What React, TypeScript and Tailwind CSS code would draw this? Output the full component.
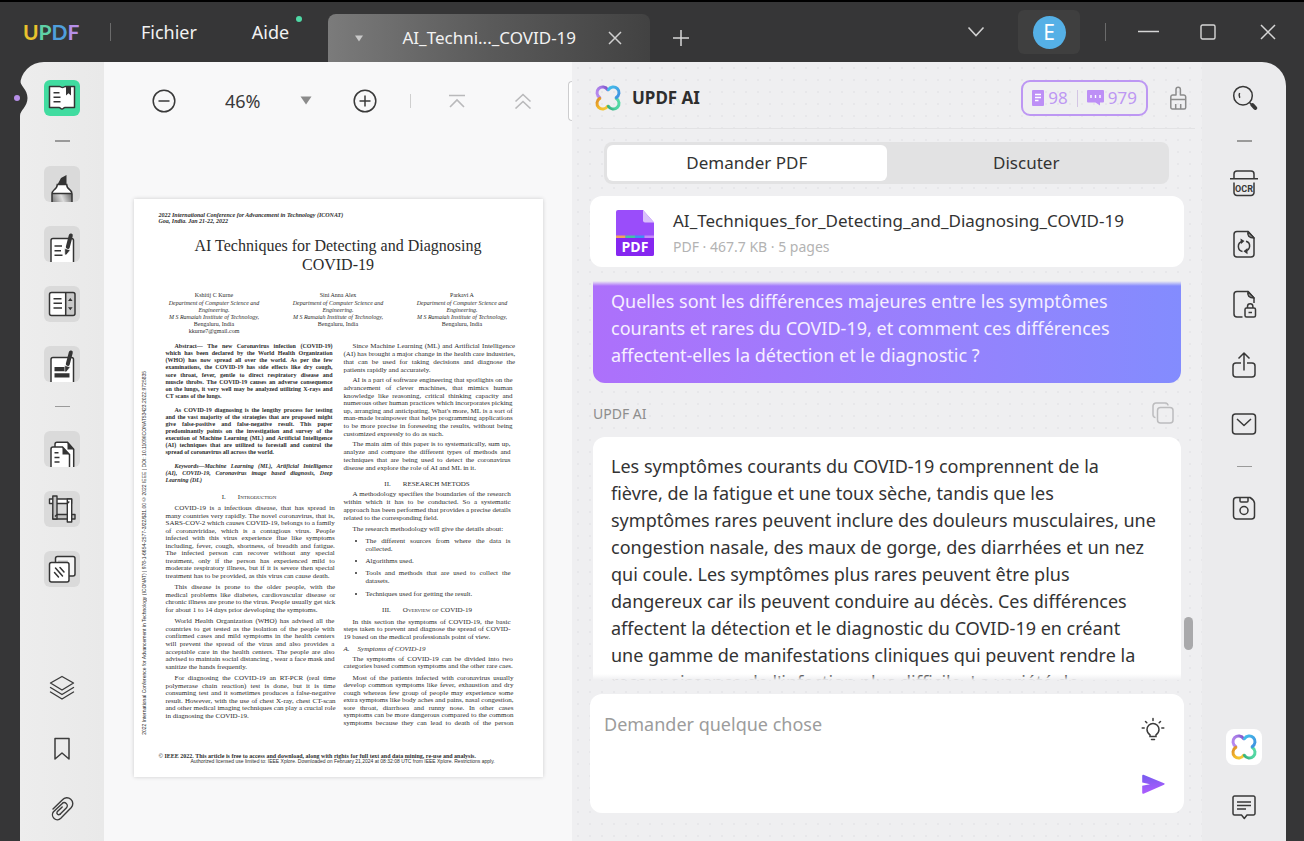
import React from "react";

const ui = "font-['Noto_Sans','Open_Sans',sans-serif]";

/* ---------- Brand ---------- */

function Wordmark() {
  return (
    <span className="font-['Lato',sans-serif] text-[21px] leading-6 font-bold">
      <span className="text-[#e8c22e]">U</span>
      <span className="text-[#5fd0a6]">P</span>
      <span className="text-[#4f9fdc]">D</span>
      <span className="text-[#b78fe8]">F</span>
    </span>
  );
}

function Clover({ id }: { id: string }) {
  return (
    <svg width="28" height="28" viewBox="0 0 28 28" fill="none" strokeWidth="3" strokeLinecap="round" aria-hidden="true">
      <defs>
        <linearGradient id={id + "p"} x1="2" y1="12" x2="14" y2="4" gradientUnits="userSpaceOnUse">
          <stop stopColor="#b98cf0" />
          <stop offset="0.6" stopColor="#a77be6" />
          <stop offset="1" stopColor="#7a50c8" />
        </linearGradient>
        <linearGradient id={id + "b"} x1="14" y1="3" x2="26" y2="13" gradientUnits="userSpaceOnUse">
          <stop stopColor="#45c0ea" />
          <stop offset="1" stopColor="#3f8fe0" />
        </linearGradient>
        <linearGradient id={id + "g"} x1="26" y1="15" x2="14" y2="26" gradientUnits="userSpaceOnUse">
          <stop stopColor="#58dba6" />
          <stop offset="0.6" stopColor="#4fd2a0" />
          <stop offset="1" stopColor="#2ba070" />
        </linearGradient>
        <linearGradient id={id + "y"} x1="3" y1="15" x2="14" y2="26" gradientUnits="userSpaceOnUse">
          <stop stopColor="#dd8f2a" />
          <stop offset="0.5" stopColor="#f3b929" />
          <stop offset="1" stopColor="#f0cf3a" />
        </linearGradient>
      </defs>
      <path d="M5.800 13.600A5.700 5.700 0 1 1 13.600 5.800" stroke={`url(#${id}p)`} />
      <path d="M5.800 14.400A5.700 5.700 0 1 0 13.600 22.200" stroke={`url(#${id}y)`} />
      <path d="M14.400 22.200A5.700 5.700 0 1 0 22.200 14.400" stroke={`url(#${id}g)`} />
      <path d="M14.400 5.800A5.700 5.700 0 1 1 22.200 13.600" stroke={`url(#${id}b)`} />
    </svg>
  );
}

/* ---------- Title bar ---------- */

function TitleBar() {
  return (
    <header className="flex h-[62px] shrink-0 items-center border-t-2 border-black pl-[23px] pr-7 text-[#f2f2f2]">
      <Wordmark />
      <span className="ml-[31px] h-[18px] w-px bg-[#6b6b6b]" />
      <nav className="ml-[29px] flex text-[18px] leading-6">
        <button className="w-[57px]">Fichier</button>
        <button className="relative ml-[53px] w-10">
          Aide
          <span className="absolute -right-3 -top-1 size-[6px] rounded-full bg-[#4fd9a5]" />
        </button>
      </nav>
      <div className="ml-[38px] flex h-12 w-[322px] items-center self-end rounded-t-lg bg-linear-to-r from-[#7b7b7b] via-[#5a5a5a] to-[#424242] pl-[26px] pr-[28px]">
        <svg width="10" height="7" viewBox="0 0 10 7" aria-hidden="true">
          <path d="M1 .5h8L5 6.500z" fill="#c9c9c9" />
        </svg>
        <span className="ml-[38px] flex-1 whitespace-nowrap text-[17px] leading-6">AI_Techni..._COVID-19</span>
        <button aria-label="Fermer l'onglet">
          <svg width="14" height="14" viewBox="0 0 14 14" stroke="#d0d0d0" strokeWidth="1.500" aria-hidden="true">
            <path d="M1 1l12 12M13 1L1 13" />
          </svg>
        </button>
      </div>
      <button aria-label="Nouvel onglet" className="ml-[22px] mt-3">
        <svg width="18" height="18" viewBox="0 0 18 18" stroke="#d8d8d8" strokeWidth="1.500" aria-hidden="true">
          <path d="M9 1v16M1 9h16" />
        </svg>
      </button>
      <div className="ml-auto flex items-center">
        <button aria-label="Liste des onglets">
          <svg width="18" height="12" viewBox="0 0 18 12" fill="none" stroke="#d0d0d0" strokeWidth="1.600" aria-hidden="true">
            <path d="M1.500 1.500L9 9.500l7.500-8" />
          </svg>
        </button>
        <button className="ml-[33px] flex h-11 w-[62px] items-center justify-center rounded-md bg-[#3f3f3f]">
          <span className="flex size-[33px] items-center justify-center rounded-full bg-[#55b0e6] text-[21px] leading-none text-white">E</span>
        </button>
        <span className="ml-[25px] h-[18px] w-px bg-[#6b6b6b]" />
        <button aria-label="Réduire" className="ml-8">
          <svg width="22" height="16" viewBox="0 0 22 16" stroke="#d6d6d6" strokeWidth="1.500" aria-hidden="true">
            <path d="M0 7.500h21" />
          </svg>
        </button>
        <button aria-label="Agrandir" className="ml-[40px]">
          <svg width="16" height="16" viewBox="0 0 16 16" fill="none" stroke="#d6d6d6" strokeWidth="1.400" aria-hidden="true">
            <rect x="1" y="1" width="14" height="14" rx="1.500" />
          </svg>
        </button>
        <button aria-label="Fermer" className="ml-[44px]">
          <svg width="16" height="16" viewBox="0 0 16 16" stroke="#d6d6d6" strokeWidth="1.500" aria-hidden="true">
            <path d="M1 1l14 14M15 1L1 15" />
          </svg>
        </button>
      </div>
    </header>
  );
}

/* ---------- Left rail ---------- */

const ink = "#343434";

const bookIcon = (
  <g>
    <path d="M5.500 6.500H15.500C17 6.500 17 7.500 18.500 7.500S20 6.500 21.500 6.500H30.500V27.500H21C19.500 27.500 19.500 29 18 29S16.500 27.500 15 27.500H5.500z" fill="#fff" stroke={ink} strokeWidth="1.500" strokeLinejoin="round" />
    <path d="M9.500 12.700h6M9.500 17.300h7M9.500 21.800h7" stroke={ink} strokeWidth="1.500" />
    <path d="M22 6h5v9.500l-2.500-2.200L22 15.500z" fill={ink} />
  </g>
);

const highlighterIcon = (
  <g>
    <path d="M13.500 18.500L17 12l5.500-3v9.500z" fill={ink} />
    <path d="M13.300 18.500h9.700c0 3 1 4 3 5.500 1.500 1 2 2 2 4v8H8v-8c0-2 .8-3 2-4 2.300-1.700 3.300-3 3.300-5.500z" fill="#fff" />
    <path d="M8 27.500h20V36H8z" fill="url(#hl)" />
    <path d="M8 36v-8c0-2 .8-3 2-4 2.300-1.700 3.300-3 3.300-5.500h9.400c0 3 1 4 3.300 5.500 1.500 1 2 2 2 4v8M8 27.500h20" fill="none" stroke={ink} strokeWidth="1.500" />
  </g>
);

function pen(dy: number) {
  return (
    <g transform={`translate(0 ${dy})`}>
      <path d="M26.800 9.500L23.800 21" stroke={ink} strokeWidth="4" strokeLinecap="round" />
      <path d="M20.700 22.500l5.600 1.500-3.600 4.500c-1 .8-1.800.5-1.900-.6z" fill={ink} stroke="#fff" strokeWidth=".6" />
    </g>
  );
}

const editIcon = (
  <g>
    <path d="M7 37V14.500a2 2 0 0 1 2-2h18.500a2 2 0 0 1 2 2V37z" fill="#fff" stroke={ink} strokeWidth="1.500" />
    <path d="M10.500 20h7.500M10.500 24.700h6.500M10.500 29.300h8" stroke={ink} strokeWidth="1.500" />
    {pen(0)}
  </g>
);

const formIcon = (
  <g>
    <rect x="5.500" y="6.500" width="25.500" height="23" rx="2" fill="#fff" />
    <path d="M21.700 6.500H29a2 2 0 0 1 2 2v19a2 2 0 0 1-2 2h-7.300z" fill="#c9c9c9" />
    <rect x="5.500" y="6.500" width="25.500" height="23" rx="2" fill="none" stroke={ink} strokeWidth="1.500" />
    <path d="M21.700 6.500v23" stroke={ink} strokeWidth="1.500" />
    <path d="M9.500 12.700h8M9.500 17.300h8.500M9.500 22h8.500" stroke={ink} strokeWidth="1.500" />
    <path d="M24 15l2.300-3 2.300 3zM24 21.300l2.300 3 2.300-3z" fill={ink} />
  </g>
);

const redactIcon = (
  <g>
    <path d="M7 37V13.500a2 2 0 0 1 2-2h18.500a2 2 0 0 1 2 2V37z" fill="#fff" stroke={ink} strokeWidth="1.500" />
    <path d="M10.500 21h10.500v4.200H10.500zM10.500 27.200h15v4.200h-15z" fill={ink} />
    {pen(-3)}
  </g>
);

const pagesIcon = (
  <g>
    <path d="M11 37V13.200a2 2 0 0 1 2-2h10.500l6.200 7V37z" fill="#fff" stroke={ink} strokeWidth="1.500" />
    <path d="M23.500 11v7.500h6.500z" fill={ink} />
    <path d="M7 37V18a2 2 0 0 1 2-2h9.500l7 7.500V37z" fill="#fff" stroke={ink} strokeWidth="1.500" />
    <path d="M18.500 16v7.500h7z" fill={ink} />
    <path d="M10.500 21.800h4M10.500 26.400h5M10.500 31h5" stroke={ink} strokeWidth="1.500" />
  </g>
);

const cropIcon = (
  <g stroke={ink} strokeWidth="1.400" strokeLinejoin="round">
    <rect x="9" y="23.500" width="22" height="4.500" fill="#c4c4c4" />
    <rect x="5.500" y="8" width="22" height="4.500" fill="#fff" />
    <rect x="8.800" y="5" width="4.200" height="23" fill="#c4c4c4" />
    <rect x="23.300" y="8" width="4.400" height="23" fill="#fff" />
    <path d="M23.300 12.500l2-2M13 23.500l-2 2" />
  </g>
);

const watermarkIcon = (
  <g stroke={ink} strokeWidth="1.500">
    <rect x="11.500" y="5.500" width="19.500" height="19.500" rx="2" fill="#f4f4f4" />
    <path d="M14 9.500h10v3H14z" fill="#c4c4c4" stroke="none" />
    <rect x="5.500" y="11.500" width="19.500" height="19.500" rx="2" fill="#fff" />
    <path d="M10.500 21.500l4 4.500M11.500 17l7 8M16 16.500l4 4.500" strokeLinecap="round" />
  </g>
);

const tiles: { label: string; art: React.ReactNode; box: string }[] = [
  { label: "Lecteur", art: bookIcon, box: "bg-[#41dca0]" },
  { label: "Commentaire", art: highlighterIcon, box: "bg-[#dadada]" },
  { label: "Modifier", art: editIcon, box: "bg-[#dadada]" },
  { label: "Formulaire", art: formIcon, box: "bg-[#dadada]" },
  { label: "Biffer", art: redactIcon, box: "bg-[#dadada]" },
  { label: "Organiser les pages", art: pagesIcon, box: "bg-[#dadada]" },
  { label: "Recadrer", art: cropIcon, box: "bg-[#dadada]" },
  { label: "Filigrane", art: watermarkIcon, box: "bg-[#dadada]" },
];

function Tile({ index }: { index: number }) {
  const t = tiles[index];
  return (
    <button aria-label={t.label} className={"size-9 overflow-hidden rounded-md " + t.box}>
      <svg width="36" height="36" viewBox="0 0 36 36" fill="none" aria-hidden="true">
        <defs>
          <linearGradient id="hl" x1="8" y1="36" x2="28" y2="28" gradientUnits="userSpaceOnUse">
            <stop stopColor="#777" />
            <stop offset="0.5" stopColor="#ddd" />
            <stop offset="1" stopColor="#666" />
          </linearGradient>
        </defs>
        {t.art}
      </svg>
    </button>
  );
}

function Dash({ thick = false }: { thick?: boolean }) {
  return <span className={"w-[15px] bg-[#9a9a9a] " + (thick ? "h-[2px]" : "h-px")} />;
}

function LeftRail() {
  return (
    <aside className="relative flex flex-col items-center rounded-tl-[24px] bg-linear-to-r from-[#ededed] to-[#e9e9e9] pb-[18px] pt-[18px]">
      <svg className="absolute -left-2 top-[18px]" width="16" height="36" viewBox="0 0 16 36" aria-hidden="true">
        <path d="M8 0C8 6 15.500 9 15.500 18S8 30 8 36z" fill="#363636" />
        <circle cx="5" cy="18" r="3" fill="#b78fe8" />
      </svg>
      <Tile index={0} />
      <div className="my-6 flex"><Dash thick /></div>
      <div className="flex flex-col gap-6">
        <Tile index={1} />
        <Tile index={2} />
        <Tile index={3} />
        <Tile index={4} />
      </div>
      <div className="my-6 flex"><Dash /></div>
      <div className="flex flex-col gap-6">
        <Tile index={5} />
        <Tile index={6} />
        <Tile index={7} />
      </div>
      <div className="mt-auto flex flex-col items-center gap-9 text-[#3c3c3c]">
        <button aria-label="Calques">
          <svg width="26" height="26" viewBox="0 0 26 26" fill="none" stroke="currentColor" strokeWidth="1.400" strokeLinejoin="round" strokeLinecap="round" aria-hidden="true">
            <path d="M1.500 8L13 1.500 24.500 8 13 15z" />
            <path d="M1.500 12.500L13 19.500l11.500-7M1.500 17L13 24l11.500-7" />
          </svg>
        </button>
        <button aria-label="Signets">
          <svg width="18" height="24" viewBox="0 0 18 24" fill="none" stroke="currentColor" strokeWidth="1.500" strokeLinejoin="round" aria-hidden="true">
            <path d="M2 1.500h14v20.500l-7-6-7 6z" />
          </svg>
        </button>
        <button aria-label="Pièces jointes">
          <svg width="26" height="26" viewBox="0 0 26 26" fill="none" stroke="currentColor" strokeWidth="1.400" strokeLinecap="round" aria-hidden="true">
            <path d="M4 12L13.500 2.800A5.800 5.800 0 0 1 22.300 10.500L11.800 21.300A4.900 4.900 0 0 1 4.500 14.800L13 6.800A2.900 2.900 0 0 1 17.500 10.800L11 17.300" />
            <path d="M11 17.300A1.900 1.900 0 0 1 8.200 14.800L13.200 10" />
          </svg>
        </button>
      </div>
    </aside>
  );
}

/* ---------- Document ---------- */

function Lines({ text, className = "", indent = true, full = false }: { text: string; className?: string; indent?: boolean; full?: boolean }) {
  const rows = text.split("|");
  return (
    <p className={"grid auto-rows-fr items-center whitespace-nowrap " + className}>
      {rows.map((row, i) => (
        <span
          key={i}
          className={
            "block leading-[7px] " +
            (i === 0 && indent ? "indent-[9px] " : "") +
            (i < rows.length - 1 || full ? "[text-align-last:justify]" : "")
          }
        >
          {row}{" "}
        </span>
      ))}
    </p>
  );
}

function SectionTitle({ number, title, className }: { number: string; title: string; className: string }) {
  return (
    <h3 className={"flex justify-center gap-3 leading-[7px] [font-variant-caps:small-caps] " + className}>
      <span>{number}</span>
      <span>{title}</span>
    </h3>
  );
}

function Author({ name, mail }: { name: string; mail?: string }) {
  return (
    <div className="w-[124px] text-center text-[6px] leading-[7px]">
      <p className="mb-px">{name}</p>
      <p className="italic">Department of Computer Science and</p>
      <p className="italic">Engineering.</p>
      <p className="italic">M S Ramaiah Institute of Technology,</p>
      <p>Bengaluru, India</p>
      {mail && <p>{mail}</p>}
    </div>
  );
}

function Paper() {
  return (
    <article className="relative mx-auto mt-[60px] h-[578px] w-[409px] bg-white pt-[13px] font-['Liberation_Serif',serif] text-[7px] text-[#2c2c2c] shadow-[0_0_4px_rgba(0,0,0,0.18)]">
      <div className="ml-[25px] text-[6px] font-bold italic leading-[6px]">
        <p>2022 International Conference for Advancement in Technology (ICONAT)</p>
        <p>Goa, India. Jan 21-22, 2022</p>
      </div>
      <h1 className="mt-[12px] text-center text-[16px] leading-[19px]">
        AI Techniques for Detecting and Diagnosing
        <br />
        COVID-19
      </h1>
      <div className="mt-[18px] flex h-[51px] justify-center">
        <Author name="Kshitij C Kurne" mail="kkurne7@gmail.com" />
        <Author name="Sini Anna Alex" />
        <Author name="Parkavi A" />
      </div>
      <div className="mx-8 flex justify-between">
        <div className="w-[167px]">
          <div className="text-[6px] font-bold">
            <Lines className="h-[57px]" text="Abstract— The new Coronavirus infection (COVID-19)|which has been declared by the World Health Organization|(WHO) has now spread all over the world. As per the few|examinations, the COVID-19 has side effects like dry cough,|sore throat, fever, gentle to direct respiratory disease and|muscle throbs. The COVID-19 causes an adverse consequence|on the lungs, it very well may be analyzed utilizing X-rays and|CT scans of the lungs." />
            <Lines className="mt-[7px] h-[49px]" text="As COVID-19 diagnosing is the lengthy process for testing|and the vast majority of the strategies that are proposed might|give false-positive and false-negative result. This paper|predominantly points on the investigation and survey of the|execution of Machine Learning (ML) and Artificial Intelligence|(AI) techniques that are utilized to forestall and control the|spread of coronavirus all across the world." />
            <Lines className="mt-[7px] h-[21px] italic" text="Keywords—Machine Learning (ML), Artificial Intelligence|(AI), COVID-19, Coronavirus image based diagnosis, Deep|Learning (DL)" />
          </div>
          <SectionTitle className="mt-[10px]" number="I." title="Introduction" />
          <Lines className="mt-1 h-[75px]" text="COVID-19 is a infectious disease, that has spread in|many countries very rapidly. The novel coronavirus, that is,|SARS-COV-2 which causes COVID-19, belongs to a family|of coronaviridae, which is a contagious virus. People|infected with this virus experience flue like symptoms|including, fever, cough, shortness, of breadth and fatigue.|The infected person can recover without any special|treatment, only if the person has experienced mild to|moderate respiratory illness, but if it is severe then special|treatment has to be provided, as this virus can cause death." />
          <Lines className="mt-1 h-[30px]" text="This disease is prone to the older people, with the|medical problems like diabetes, cardiovascular disease or|chronic illness are prone to the virus. People usually get sick|for about 1 to 14 days prior developing the symptoms." />
          <Lines className="mt-1 h-[53px]" text="World Health Organization (WHO) has advised all the|countries to get tested as the isolation of the people with|confirmed cases and mild symptoms in the health centers|will prevent the spread of the virus and also provides a|acceptable care in the health centers. The people are also|advised to maintain social distancing , wear a face mask and|sanitize the hands frequently." />
          <Lines className="mt-1 h-[45px]" text="For diagnosing the COVID-19 an RT-PCR (real time|polymerase chain reaction) test is done, but it is time|consuming test and it sometimes produces a false-negative|result. However, with the use of chest X-ray, chest CT-scan|and other medical imaging techniques can play a crucial role|in diagnosing the COVID-19." />
        </div>
        <div className="w-[167px]">
          <Lines className="h-[31px]" text="Since Machine Learning (ML) and Artificial Intelligence|(AI) has brought a major change in the health care industries,|that can be used for taking decisions and diagnose the|patients rapidly and accurately." />
          <Lines className="mt-[3px] h-[61px]" text="AI is a part of software engineering that spotlights on the|advancement of clever machines, that mimics human|knowledge like reasoning, critical thinking capacity and|numerous other human practices which incorporates picking|up, arranging and anticipating. What's more, ML is a sort of|man-made brainpower that helps programming applications|to be more precise in foreseeing the results, without being|customized expressly to do as such." />
          <Lines className="mt-[3px] h-[31px]" text="The main aim of this paper is to systematically, sum up,|analyze and compare the different types of methods and|techniques that are being used to detect the coronavirus|disease and explore the role of AI and ML in it." />
          <SectionTitle className="mt-[9px]" number="II." title="RESEARCH METODS" />
          <Lines className="mt-[3px] h-[31px]" text="A methodology specifies the boundaries of the research|within which it has to be conducted. So a systematic|approach has been performed that provides a precise details|related to the corresponding field." />
          <Lines className="mt-[3px] h-[8px]" text="The research methodology will give the details about:" />
          <ul className="ml-[22px] mt-1 flex list-disc flex-col gap-1 leading-[8px]">
            <li><Lines indent={false} className="h-[15px]" text="The different sources from where the data is|collected." /></li>
            <li><Lines indent={false} className="h-[8px]" text="Algorithms used." /></li>
            <li><Lines indent={false} className="h-[16px]" text="Tools and methods that are used to collect the|datasets." /></li>
            <li><Lines indent={false} className="h-[8px]" text="Techniques used for getting the result." /></li>
          </ul>
          <SectionTitle className="mt-[9px]" number="III." title="Overview of COVID-19" />
          <Lines className="mt-1 h-[23px]" text="In this section the symptoms of COVID-19, the basic|steps taken to prevent and diagnose the spread of COVID-|19 based on the medical professionals point of view." />
          <h4 className="mt-1 flex h-2 gap-2 italic leading-[8px]">
            <span>A.</span>
            <span>Symptoms of COVID-19</span>
          </h4>
          <Lines className="mt-[2px] h-[15px]" text="The symptoms of COVID-19 can be divided into two|categories based common symptoms and the other rare caes." />
          <Lines full className="mt-1 h-[53px]" text="Most of the patients infected with coronavirus usually|develop common symptoms like fever, exhaustion and dry|cough whereas few group of people may experience some|extra symptoms like body aches and pains, nasal congestion,|sore throat, diarrhoea and runny nose. In other cases|symptoms can be more dangerous compared to the common|symptoms because they can lead to death of the person" />
        </div>
      </div>
      <footer className="mt-[27px] whitespace-nowrap">
        <p className="ml-[25px] text-[6px] font-bold leading-[5px]">© IEEE 2022. This article is free to access and download, along with rights for full text and data mining, re-use and analysis.</p>
        <p className="ml-[57px] font-['Liberation_Sans',sans-serif] text-[5px] leading-[4px]">Authorized licensed use limited to: IEEE Xplore. Downloaded on February 21,2024 at 08:32:08 UTC from IEEE Xplore. Restrictions apply.</p>
      </footer>
      <p className="absolute bottom-[42px] left-[7px] rotate-180 whitespace-nowrap font-['Liberation_Sans',sans-serif] text-[5px] leading-[7px] [writing-mode:vertical-rl]">
        2022 International Conference for Advancement in Technology (ICONAT) | 978-1-6654-2577-3/22/$31.00 ©2022 IEEE | DOI: 10.1109/ICONAT53423.2022.9725835
      </p>
    </article>
  );
}

function Viewer() {
  return (
    <main className="min-w-0 overflow-hidden bg-[#f8f8f9]">
      <div className="flex h-[77px] items-center pl-12 text-[#3a3a3a]">
        <button aria-label="Zoom arrière">
          <svg width="24" height="24" viewBox="0 0 24 24" fill="none" stroke="currentColor" strokeWidth="1.500" aria-hidden="true">
            <circle cx="12" cy="12" r="10.800" />
            <path d="M6.500 12h11" />
          </svg>
        </button>
        <div className="relative ml-[49px] flex items-center">
          <select aria-label="Niveau de zoom" defaultValue="46" className="w-[87px] appearance-none bg-transparent text-[18px] leading-6">
            <option value="46">46%</option>
            <option value="100">100%</option>
          </select>
          <svg className="pointer-events-none absolute right-0" width="12" height="9" viewBox="0 0 12 9" aria-hidden="true">
            <path d="M.5.500h11L6 8.500z" fill="#8b8b8b" />
          </svg>
        </div>
        <button aria-label="Zoom avant" className="ml-[41px]">
          <svg width="24" height="24" viewBox="0 0 24 24" fill="none" stroke="currentColor" strokeWidth="1.500" aria-hidden="true">
            <circle cx="12" cy="12" r="10.800" />
            <path d="M6.500 12h11M12 6.500v11" />
          </svg>
        </button>
        <span className="ml-[33px] h-[14px] w-px bg-[#cfcfcf]" />
        <button aria-label="Première page" className="ml-[37px] text-[#b9b9bb]">
          <svg width="18" height="14" viewBox="0 0 18 14" fill="none" stroke="currentColor" strokeWidth="1.600" aria-hidden="true">
            <path d="M1 1.500h16M2 13l7-7 7 7" />
          </svg>
        </button>
        <button aria-label="Page précédente" className="ml-12 text-[#b9b9bb]">
          <svg width="18" height="16" viewBox="0 0 18 16" fill="none" stroke="currentColor" strokeWidth="1.600" aria-hidden="true">
            <path d="M1.500 8.500L9 1.500l7.500 7M1.500 15.500L9 8.500l7.500 7" />
          </svg>
        </button>
        <span className="ml-auto h-10 w-1 shrink-0 rounded-l-sm border-y border-l border-[#cdcdcf] bg-white" />
      </div>
      <Paper />
    </main>
  );
}

/* ---------- Assistant ---------- */

function PdfBadge() {
  return (
    <svg width="38" height="46" viewBox="0 0 38 46" aria-hidden="true">
      <path d="M2 0h25l11 12.500V44a2 2 0 0 1-2 2H2a2 2 0 0 1-2-2V2a2 2 0 0 1 2-2z" fill="#9a4dfa" />
      <path d="M0 28h38v16a2 2 0 0 1-2 2H2a2 2 0 0 1-2-2z" fill="#8526f0" />
      <path d="M27 0l11 12.500h-9a2 2 0 0 1-2-2z" fill="#d9bffb" />
      <path d="M0 25.500h9.500V28H0z" fill="#f2a35e" />
      <path d="M9.500 25.500H19V28H9.500z" fill="#45c0a8" />
      <path d="M19 25.500h9.500V28H19z" fill="#3f8ff5" />
      <path d="M28.500 25.500H38V28h-9.500z" fill="#c58cf8" />
      <text x="19" y="42" textAnchor="middle" fontFamily="Open Sans, sans-serif" fontWeight="700" fontSize="14" fill="#fff">PDF</text>
    </svg>
  );
}

function AssistantHeader() {
  return (
    <div className="flex h-[67px] shrink-0 items-center border-b border-[#e2e2e4] pb-px pl-[4px] pr-[8px] pt-[7px]">
      <Clover id="head" />
      <h2 className="ml-[10px] text-[17px] font-bold leading-6 text-[#2e2e2e]">UPDF AI</h2>
      <div className="ml-auto flex h-9 items-center rounded-[9px] border-2 border-[#bd97f3] px-[9px] text-[17px] leading-6 text-[#bd97f3]">
        <svg width="12" height="16" viewBox="0 0 12 16" aria-hidden="true">
          <rect width="12" height="16" rx="1" fill="#bd8ff6" />
          <path d="M3 4.500h6M3 7.500h6M3 10.500h3.500" stroke="#fff" strokeWidth="1.300" />
        </svg>
        <span className="ml-1">98</span>
        <span className="mx-[9px] h-[17px] w-px bg-[#d3c5e4]" />
        <svg width="17" height="16" viewBox="0 0 17 16" aria-hidden="true">
          <path d="M1 0h15a1 1 0 0 1 1 1v10.500a1 1 0 0 1-1 1h-3v3l-4.500-3H1a1 1 0 0 1-1-1V1a1 1 0 0 1 1-1z" fill="#bd8ff6" />
          <path d="M4 5v3M8.500 5v3M13 5v3" stroke="#fff" strokeWidth="1.400" />
        </svg>
        <span className="ml-1">979</span>
      </div>
      <button aria-label="Effacer la conversation" className="ml-[21px]">
        <svg width="18" height="24" viewBox="0 0 18 24" fill="none" stroke="#8c8c8c" strokeWidth="1.500" strokeLinejoin="round" aria-hidden="true">
          <path d="M7 9V3.500a2.200 2.200 0 0 1 4.400 0V9h3.300a2 2 0 0 1 2 2v10.500a1.500 1.500 0 0 1-1.500 1.500H3.300a1.500 1.500 0 0 1-1.500-1.500V11a2 2 0 0 1 2-2zM1.800 13.500h15M6.700 23v-5M11.700 23v-5" />
        </svg>
      </button>
    </div>
  );
}

const answer = [
  "Les symptômes courants du COVID-19 comprennent de la",
  "fièvre, de la fatigue et une toux sèche, tandis que les",
  "symptômes rares peuvent inclure des douleurs musculaires, une",
  "congestion nasale, des maux de gorge, des diarrhées et un nez",
  "qui coule. Les symptômes plus rares peuvent être plus",
  "dangereux car ils peuvent conduire au décès. Ces différences",
  "affectent la détection et le diagnostic du COVID-19 en créant",
  "une gamme de manifestations cliniques qui peuvent rendre la",
  "reconnaissance de l'infection plus difficile. La variété de",
];

const question = [
  "Quelles sont les différences majeures entre les symptômes",
  "courants et rares du COVID-19, et comment ces différences",
  "affectent-elles la détection et le diagnostic ?",
];

function Assistant() {
  return (
    <section className="flex min-h-0 min-w-0 flex-col bg-[#efeff1] bg-[radial-gradient(#e7e7ea_1px,transparent_1px)] bg-[length:12px_12px] pb-[28px] pl-[18px] pr-[7px]">
      <AssistantHeader />
      <div className="mr-[11px] flex min-h-0 flex-1 flex-col">
        <div role="tablist" className="ml-[14px] mr-[15px] mt-[13px] flex h-[42px] shrink-0 rounded-lg bg-[#e2e2e3] p-[3px] text-[17px] leading-6 text-[#333]">
          <button role="tab" aria-selected="true" className="flex-1 rounded-md bg-white">Demander PDF</button>
          <button role="tab" aria-selected="false" className="flex-1">Discuter</button>
        </div>
        <div className="mt-3 flex h-[71px] shrink-0 items-center rounded-xl bg-white pl-[26px] pt-[2px]">
          <PdfBadge />
          <div className="ml-[19px] whitespace-nowrap">
            <p className="text-[17px] leading-7 text-[#333]">AI_Techniques_for_Detecting_and_Diagnosing_COVID-19</p>
            <p className="text-[14px] leading-6 text-[#b3b3b3]">PDF · 467.7 KB · 5 pages</p>
          </div>
        </div>
        <div className="relative mt-[14px] flex min-h-0 flex-1 flex-col">
          <div className="relative mx-[3px] min-h-0 flex-1 overflow-hidden text-[18px] leading-[27px]">
            <div className="whitespace-nowrap rounded-b-xl bg-linear-to-r from-[#ad70fb] to-[#838cfe] px-[18px] pb-[14px] pt-[7px] text-[#f6efff]">
              {question.map((row) => (
                <p key={row}>{row}</p>
              ))}
            </div>
            <div className="flex h-[54px] items-center justify-between pr-[7px] pt-[6px] text-[14px] text-[#8d8d8d]">
              <span>UPDF AI</span>
              <button aria-label="Copier">
                <svg width="22" height="22" viewBox="0 0 22 22" fill="none" stroke="#bcbcbe" strokeWidth="1.500" aria-hidden="true">
                  <rect x="5.500" y="5.500" width="15.500" height="15.500" rx="3" />
                  <path d="M3.500 15.500A2.500 2.500 0 0 1 1 13V4a3 3 0 0 1 3-3h9.500A2.500 2.500 0 0 1 16 3.500" />
                </svg>
              </button>
            </div>
            <div className="whitespace-nowrap rounded-t-xl bg-white px-[18px] pb-4 pt-4 text-[#333]">
              {answer.map((row) => (
                <p key={row}>{row}</p>
              ))}
            </div>
            <div className="absolute inset-x-0 top-0 h-[5px] bg-linear-to-b from-[#efeff1] to-transparent" />
            <div className="absolute inset-x-0 bottom-0 h-[6px] bg-linear-to-b from-transparent to-[#efeff1]" />
          </div>
          <span className="absolute -right-[9px] bottom-[30px] h-[33px] w-[9px] rounded-full bg-[#a9a9ab]" />
        </div>
        <form className="mt-[14px] flex h-[119px] shrink-0 rounded-xl bg-white py-[17px] pl-[14px] pr-[19px]" onSubmit={(e) => e.preventDefault()}>
          <textarea aria-label="Demander quelque chose" placeholder="Demander quelque chose" className="min-w-0 flex-1 resize-none bg-transparent text-[18px] leading-[27px] outline-none placeholder:text-[#9c9c9c]" />
          <div className="flex flex-col items-center justify-between pt-[6px]">
            <button type="button" aria-label="Suggestions">
              <svg width="24" height="24" viewBox="0 0 24 24" fill="none" stroke="#3c3c3c" strokeWidth="1.500" strokeLinecap="round" aria-hidden="true">
                <path d="M9 19.500v-1.700c-1.800-1.200-3-3-3-5.300a6 6 0 0 1 12 0c0 2.300-1.200 4.100-3 5.300v1.700zM10.500 22.500h3M12 1.500v2M4.500 4.500l1.300 1.300M19.500 4.500l-1.300 1.300M1.200 11h2M20.800 11h2" />
              </svg>
            </button>
            <button type="submit" aria-label="Envoyer">
              <svg width="24" height="22" viewBox="0 0 24 22" aria-hidden="true">
                <defs>
                  <linearGradient id="send" x1="8" y1="2" x2="10" y2="20" gradientUnits="userSpaceOnUse">
                    <stop stopColor="#7b5cf0" />
                    <stop offset="1" stopColor="#b05cff" />
                  </linearGradient>
                </defs>
                <path d="M2.500.8L23 9.300c.9.400.9 1 0 1.400L2.500 19.700c-.8.300-1.300-.1-1.300-.9V11.800L9 10.200 1.200 8.600V1.700c0-.8.500-1.200 1.300-.9z" fill="url(#send)" />
              </svg>
            </button>
          </div>
        </form>
      </div>
    </section>
  );
}

/* ---------- Right rail ---------- */

function RailIcon({ label, className, children }: { label: string; className: string; children: React.ReactNode }) {
  return (
    <button aria-label={label} className={"size-7 " + className}>
      <svg width="28" height="28" viewBox="0 0 28 28" fill="none" stroke="#383838" strokeWidth="1.500" strokeLinejoin="round" aria-hidden="true">
        {children}
      </svg>
    </button>
  );
}

function RightRail() {
  return (
    <aside className="flex flex-col items-center rounded-tr-[24px] bg-[#ebebed] pb-5 pt-[22px]">
      <RailIcon label="Rechercher" className="">
        <circle cx="13" cy="11.700" r="9.300" />
        <path d="M9.600 9c-.8 1.600-.6 3.400.2 4.800" />
        <path d="M19.500 18.500l2.500 2.500" />
        <path d="M22.500 21l2.700 3" strokeWidth="4" strokeLinecap="round" />
      </RailIcon>
      <div className="mt-7 flex"><Dash thick /></div>
      <RailIcon label="OCR" className="mt-[27px]">
        <path d="M4 9V5a3 3 0 0 1 3-3h14a3 3 0 0 1 3 3v4M0 9.700h28M4 13.500v10a3 3 0 0 0 3 3h14a3 3 0 0 0 3-3v-10" />
        <text x="14" y="22.500" textAnchor="middle" fontFamily="Roboto, sans-serif" fontWeight="700" fontSize="9" fill="#383838" stroke="none">OCR</text>
      </RailIcon>
      <RailIcon label="Convertir" className="mt-[33px]">
        <path d="M7 1.500h11l6 6.500v16a3 3 0 0 1-3 3H7a3 3 0 0 1-3-3v-19.500a3 3 0 0 1 3-3z" />
        <path d="M18 1.500c-1 4 1 6.500 6 6.500z" fill="#9a9a9a" />
        <path d="M12.500 21.500c-5-.7-6-8.500 0-10.200M16 11.300c5 1.500 5 8.500-1 10" />
        <path d="M10.500 8.500l4 2.500-3.500 3zM17.500 18l-4 3.200 4 3z" fill="#383838" stroke="none" />
      </RailIcon>
      <RailIcon label="Protéger" className="mt-8">
        <path d="M12.500 27H7a3 3 0 0 1-3-3V4.500a3 3 0 0 1 3-3h11l6 6.500v5" />
        <path d="M18 1.500c-1 4 1 6.500 6 6.500z" fill="#9a9a9a" />
        <rect x="15" y="18" width="10.500" height="9" rx="1.500" />
        <path d="M17.500 18v-1.500a2.700 2.700 0 0 1 5.400 0V18M18.500 22.500h3.500" />
      </RailIcon>
      <RailIcon label="Partager" className="mt-[33px]">
        <path d="M11 12H6a3 3 0 0 0-3 3v8a3 3 0 0 0 3 3h16a3 3 0 0 0 3-3v-8a3 3 0 0 0-3-3h-5M14 19.500V2M8.500 7.500L14 2l5.500 5.500" />
      </RailIcon>
      <RailIcon label="E-mail" className="mt-[31px]">
        <rect x="2.500" y="4" width="23" height="20" rx="3" />
        <path d="M7 9l7 6.500L21 9" />
      </RailIcon>
      <div className="mt-7 flex"><Dash /></div>
      <RailIcon label="Enregistrer" className="mt-7">
        <path d="M6.500 2.500H20c2.500 1.500 4 3 4.500 5.500v13a3 3 0 0 1-3 3h-15a3 3 0 0 1-3-3v-15.500a3 3 0 0 1 3-3z" />
        <path d="M10 2.500v3.500a1 1 0 0 0 1 1h6a1 1 0 0 0 1-1V2.500" />
        <circle cx="14" cy="15.500" r="4" />
      </RailIcon>
      <button aria-label="UPDF AI" className="mt-auto flex size-9 items-center justify-center rounded-lg bg-white">
        <Clover id="rail" />
      </button>
      <RailIcon label="Commentaires" className="mt-7">
        <path d="M4.500 3h19a1.500 1.500 0 0 1 1.500 1.500v16a1.500 1.500 0 0 1-1.500 1.500H17l-2.700 3.500L11.500 22h-7A1.500 1.500 0 0 1 3 20.500v-16A1.500 1.500 0 0 1 4.500 3z" />
        <path d="M7 9h14M7 12.500h14M7 16h9" />
      </RailIcon>
    </aside>
  );
}

export default function App() {
  return (
    <div className={"flex h-screen flex-col overflow-hidden bg-[#363637] " + ui}>
      <TitleBar />
      <div className="grid min-h-0 flex-1 grid-cols-[84px_minmax(0,468fr)_minmax(0,630fr)_84px] grid-rows-[minmax(0,1fr)] pl-5 pr-[18px]">
        <LeftRail />
        <Viewer />
        <Assistant />
        <RightRail />
      </div>
    </div>
  );
}
